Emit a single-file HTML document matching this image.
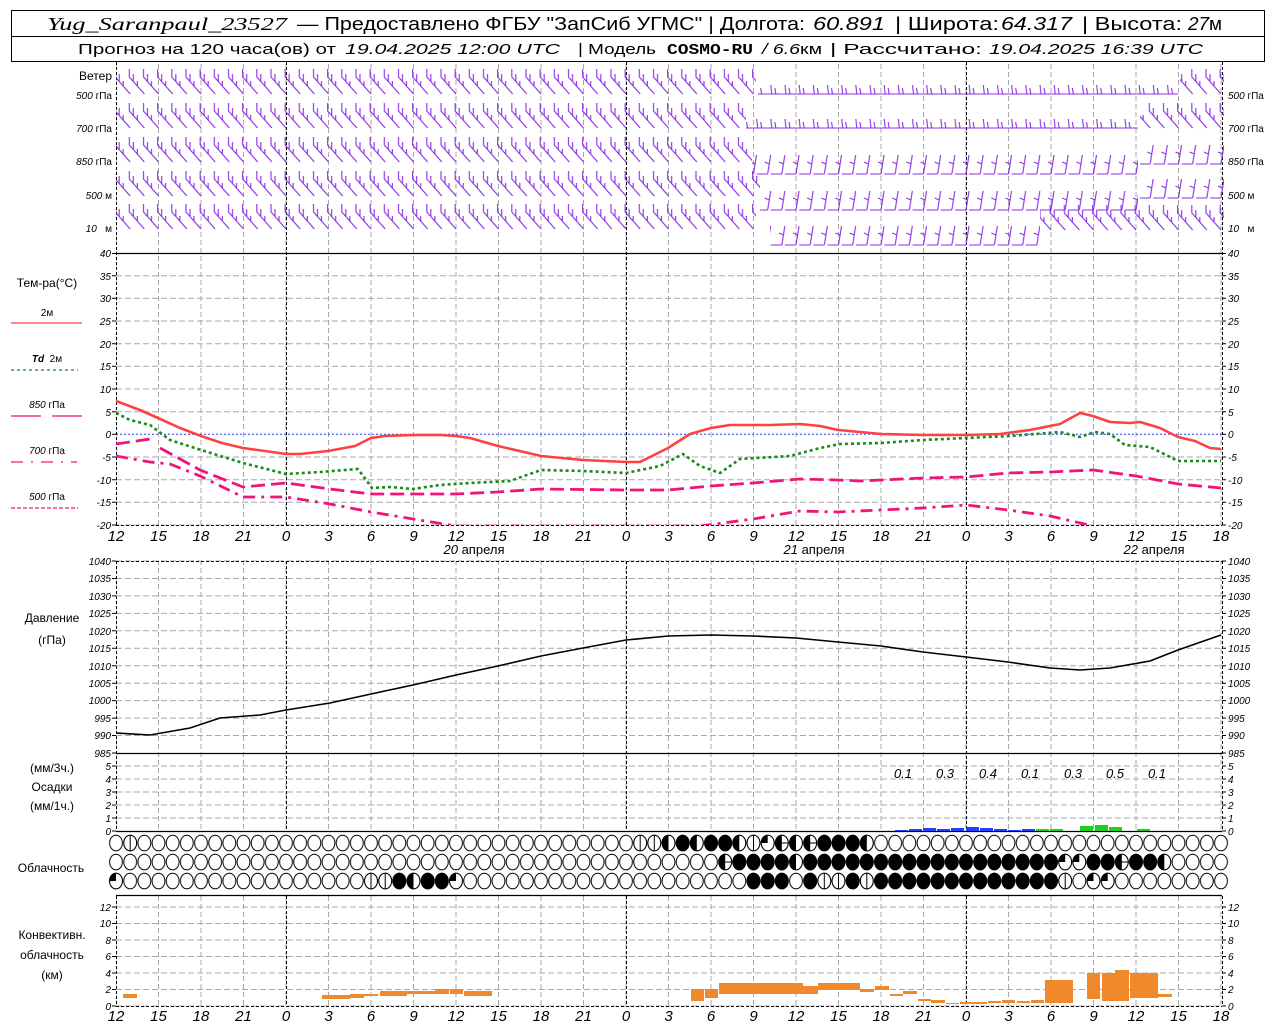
<!DOCTYPE html>
<html><head><meta charset="utf-8"><style>
html,body{margin:0;padding:0;background:#fff}
svg{display:block}
text{font-family:"Liberation Sans",sans-serif;fill:#000}
.it{font-style:italic}
.ax{font-size:10px;font-style:italic}
.lb{font-size:12px}
.hr{font-size:15px;font-style:italic;text-anchor:middle}
</style></head><body>
<svg width="1280" height="1024" viewBox="0 0 1280 1024" xmlns="http://www.w3.org/2000/svg">
<defs>
<pattern id="vg" patternUnits="userSpaceOnUse" x="115.5" y="0" width="42.5" height="8">
<line x1="0.5" y1="0" x2="0.5" y2="5" stroke="#a8a8a8" stroke-width="1"/></pattern>
<g id="bA" fill="none" stroke="#8b2ee6" stroke-width="1.1"><path d="M0,0 L-15,-17 L-15,-25 M-11,-12.5 L-11,-20 M-7,-8 L-7,-13"/></g>
<g id="bB" fill="none" stroke="#8b2ee6" stroke-width="1.1"><path d="M0,0 L3,-19 M0,0 L-11,0 M1.5,-10 L-3,-12"/></g>
<g id="bC" fill="none" stroke="#8b2ee6" stroke-width="1.1"><path d="M0,0 L-14,0 M-10,0 L-11,-9 M-6,0 L-7,-6"/></g>
<pattern id="pA" patternUnits="userSpaceOnUse" x="116" y="0" width="14.1667" height="40">
<use href="#bA" x="0" y="32"/><use href="#bA" x="14.1667" y="32"/><use href="#bA" x="28.333" y="32"/></pattern>
<pattern id="pB" patternUnits="userSpaceOnUse" x="116" y="0" width="14.1667" height="40">
<use href="#bB" x="0" y="32"/><use href="#bB" x="14.1667" y="32"/><use href="#bB" x="-14.1667" y="32"/></pattern>
<pattern id="pC" patternUnits="userSpaceOnUse" x="116" y="0" width="14.1667" height="40">
<use href="#bC" x="0" y="32"/><use href="#bC" x="14.1667" y="32"/></pattern>
<pattern id="ce" patternUnits="userSpaceOnUse" x="108.917" y="0" width="14.1667" height="20">
<ellipse cx="7.083" cy="10" rx="6.4" ry="7.8" fill="#fff" stroke="#000" stroke-width="1"/></pattern>
<g id="F"><ellipse cx="0" cy="0" rx="6.4" ry="7.8" fill="#000" stroke="#000"/></g>
<g id="V"><ellipse cx="0" cy="0" rx="6.4" ry="7.8" fill="#fff" stroke="#000"/><line x1="0" y1="-7.8" x2="0" y2="7.8" stroke="#000"/></g>
<g id="L"><ellipse cx="0" cy="0" rx="6.4" ry="7.8" fill="#fff" stroke="#000"/><path d="M0,-7.8 A6.4,7.8 0 0 0 0,7.8Z" fill="#000"/></g>
<g id="Q"><ellipse cx="0" cy="0" rx="6.4" ry="7.8" fill="#fff" stroke="#000"/><path d="M0,0 L0,-7.8 A6.4,7.8 0 0 0 -6.4,0Z" fill="#000"/></g>
<g id="P"><ellipse cx="0" cy="0" rx="6.4" ry="7.8" fill="#fff" stroke="#000"/><path d="M0,-7.8 A6.4,7.8 0 0 0 0,7.8Z" fill="#000"/><line x1="-6.4" y1="0" x2="6.4" y2="0" stroke="#000"/></g>
<clipPath id="ct"><rect x="116" y="253" width="1106" height="272"/></clipPath>
</defs>
<rect width="1280" height="1024" fill="#fff"/>

<!-- header -->
<rect x="11.5" y="10.5" width="1253" height="51" fill="none" stroke="#000"/>
<line x1="11" y1="36.5" x2="1265" y2="36.5" stroke="#000"/>
<g style="font-size:18px">
<text x="47" y="30" textLength="240" lengthAdjust="spacingAndGlyphs" class="it" style="font-family:'Liberation Serif',serif">Yug_Saranpaul_23527</text>
<text x="297" y="30" textLength="508" lengthAdjust="spacingAndGlyphs">— Предоставлено ФГБУ "ЗапСиб УГМС" | Долгота:</text>
<text x="813" y="30" textLength="72" lengthAdjust="spacingAndGlyphs" class="it">60.891</text>
<text x="895" y="30" textLength="104" lengthAdjust="spacingAndGlyphs">| Широта:</text>
<text x="1001" y="30" textLength="71" lengthAdjust="spacingAndGlyphs" class="it">64.317</text>
<text x="1082" y="30" textLength="100" lengthAdjust="spacingAndGlyphs">| Высота:</text>
<text x="1188" y="30" textLength="34" lengthAdjust="spacingAndGlyphs"><tspan class="it">27</tspan>м</text>
</g>
<g style="font-size:15px">
<text x="78" y="54" textLength="258" lengthAdjust="spacingAndGlyphs">Прогноз на 120 часа(ов) от</text>
<text x="345" y="54" textLength="215" lengthAdjust="spacingAndGlyphs" class="it">19.04.2025 12:00 UTC</text>
<text x="578" y="54" textLength="78" lengthAdjust="spacingAndGlyphs">| Модель</text>
<text x="667" y="54" textLength="86" lengthAdjust="spacingAndGlyphs" style="font-weight:bold;font-family:'Liberation Mono',monospace">COSMO-RU</text>
<text x="762" y="54" textLength="60" lengthAdjust="spacingAndGlyphs"><tspan class="it">/ 6.6</tspan>км</text>
<text x="830" y="54" textLength="152" lengthAdjust="spacingAndGlyphs">| Рассчитано:</text>
<text x="989" y="54" textLength="214" lengthAdjust="spacingAndGlyphs" class="it">19.04.2025 16:39 UTC</text>
</g>

<!-- vertical grids -->
<rect x="116" y="62" width="1107" height="191" fill="url(#vg)"/>
<rect x="116" y="253" width="1107" height="272" fill="url(#vg)"/>
<rect x="116" y="561" width="1107" height="192" fill="url(#vg)"/>
<rect x="116" y="753" width="1107" height="78" fill="url(#vg)"/>
<rect x="116" y="896" width="1107" height="110" fill="url(#vg)"/>

<!-- horizontal grids -->
<g stroke="#a8a8a8" stroke-dasharray="6,3" stroke-width="1">
<path d="M116,275.7H1222M116,298.3H1222M116,321H1222M116,343.7H1222M116,366.3H1222M116,389H1222M116,411.7H1222M116,457H1222M116,479.7H1222M116,502.3H1222M116,525H1222"/>
<path d="M116,561H1222M116,578.5H1222M116,595.9H1222M116,613.4H1222M116,630.8H1222M116,648.3H1222M116,665.7H1222M116,683.2H1222M116,700.6H1222M116,718.1H1222M116,735.5H1222"/>
<path d="M116,766H1222M116,779H1222M116,792H1222M116,805H1222M116,818H1222"/>
<path d="M116,907H1222M116,923.5H1222M116,940H1222M116,956.5H1222M116,973H1222M116,989.5H1222M116,1006H1222"/>
</g>
<line x1="116" y1="434.3" x2="1222" y2="434.3" stroke="#2040ff" stroke-dasharray="2,2" stroke-width="1"/>
<g stroke="#000" stroke-dasharray="3,2" stroke-width="1">
<path d="M286.5,62V525M626.5,62V525M966.5,62V525M286.5,561V831M626.5,561V831M966.5,561V831M286.5,896V1006M626.5,896V1006M966.5,896V1006"/>
<path d="M116.5,62V525M1222.5,62V525M116.5,561V831M1222.5,561V831M116.5,896V1006M1222.5,896V1006"/>
<path d="M116,525.5H1222M116,561.5H1222M116,1006.5H1222"/>
</g>
<g stroke="#000" stroke-width="1.3">
<path d="M116,253.5H1222M116,753.5H1222M116,831.5H1222M116,895.5H1222"/>
</g>
<g stroke="#000">
<path d="M112,275.7H116M112,298.3H116M112,321H116M112,343.7H116M112,366.3H116M112,389H116M112,411.7H116M112,434.3H116M112,457H116M112,479.7H116M112,502.3H116M112,525H116M112,253.5H116"/>
<path d="M1222,275.7H1226M1222,298.3H1226M1222,321H1226M1222,343.7H1226M1222,366.3H1226M1222,389H1226M1222,411.7H1226M1222,434.3H1226M1222,457H1226M1222,479.7H1226M1222,502.3H1226M1222,525H1226M1222,253.5H1226"/>
<path d="M112,561H116M112,578.5H116M112,595.9H116M112,613.4H116M112,630.8H116M112,648.3H116M112,665.7H116M112,683.2H116M112,700.6H116M112,718.1H116M112,735.5H116M112,753H116M112,766H116M112,779H116M112,792H116M112,805H116M112,818H116M112,831H116"/>
<path d="M1222,561H1226M1222,578.5H1226M1222,595.9H1226M1222,613.4H1226M1222,630.8H1226M1222,648.3H1226M1222,665.7H1226M1222,683.2H1226M1222,700.6H1226M1222,718.1H1226M1222,735.5H1226M1222,753H1226M1222,766H1226M1222,779H1226M1222,792H1226M1222,805H1226M1222,818H1226M1222,831H1226"/>
<path d="M112,907H116M112,923.5H116M112,940H116M112,956.5H116M112,973H116M112,989.5H116M112,1006H116M1222,907H1226M1222,923.5H1226M1222,940H1226M1222,956.5H1226M1222,973H1226M1222,989.5H1226M1222,1006H1226"/>
</g>

<!-- wind barbs -->
<g transform="translate(0,62)"><rect x="116" y="0" width="640" height="40" fill="url(#pA)"/><rect x="758" y="0" width="420" height="40" fill="url(#pC)"/><rect x="1180" y="0" width="44" height="40" fill="url(#pA)"/></g>
<g transform="translate(0,96)"><rect x="116" y="0" width="630" height="40" fill="url(#pA)"/><rect x="746" y="0" width="392" height="40" fill="url(#pC)"/><rect x="1140" y="0" width="84" height="40" fill="url(#pA)"/></g>
<g transform="translate(0,130)"><rect x="116" y="0" width="636" height="40" fill="url(#pA)"/></g>
<g transform="translate(0,142)"><rect x="752" y="0" width="386" height="40" fill="url(#pB)"/></g>
<g transform="translate(0,132)"><rect x="1140" y="0" width="84" height="40" fill="url(#pB)"/></g>
<g transform="translate(0,164)"><rect x="116" y="0" width="644" height="40" fill="url(#pA)"/></g>
<g transform="translate(0,178)"><rect x="760" y="0" width="378" height="40" fill="url(#pB)"/></g>
<g transform="translate(0,166)"><rect x="1140" y="0" width="84" height="40" fill="url(#pB)"/></g>
<g transform="translate(0,197)"><rect x="116" y="0" width="640" height="40" fill="url(#pA)"/></g>
<g transform="translate(0,213)"><rect x="770" y="0" width="270" height="40" fill="url(#pB)"/></g>
<g transform="translate(0,198)"><rect x="1040" y="0" width="184" height="40" fill="url(#pA)"/></g>

<!-- temperature curves -->
<g clip-path="url(#ct)" fill="none" stroke-linejoin="round">
<polyline stroke="#ff4040" stroke-width="2.6" points="116,401 140,410 158,418 180,428 201,436 222,443 243,448 265,451 286,454 300,454 328,451 355,446 371,438 385,436 413,435 440,435 456,436 470,438 498,446 541,456 583,460 626,462 640,462 668,448 690,434 711,428 730,425 770,425 800,424 820,426 838,430 860,432 881,434 923,435 966,435 1000,434 1030,430 1060,424 1080,413 1093,416 1110,422 1130,423 1140,422 1160,428 1178,437 1195,441 1210,448 1221,449"/>
<polyline stroke="#1a8a1a" stroke-width="2.6" stroke-dasharray="3,3" points="116,413 130,420 150,425 170,440 201,450 243,463 286,474 320,472 358,469 372,488 390,487 413,489 440,485 470,483 510,481 541,470 583,471 626,473 660,466 683,454 700,466 720,473 740,459 790,456 820,448 840,444 881,443 923,440 966,438 1010,436 1060,432 1080,437 1095,432 1110,434 1125,445 1150,447 1178,461 1221,461"/>
<path stroke="#f0147a" stroke-width="2.8" stroke-dasharray="14,6" d="M116,444 L150,439 M160,448 L200,470 L243,487 L286,483 L330,489 L371,494 L413,494 L456,494 L498,492 L541,489 L626,490 L668,490 L711,486 L753,483 L800,479 L838,480 L860,481 L881,480 L923,478 L966,477 L1008,473 L1050,472 L1093,470 L1136,476 L1178,484 L1221,488"/>
<polyline stroke="#f0147a" stroke-width="2.8" stroke-dasharray="12,6,3,6" points="116,456 150,462 170,464 200,476 243,497 286,497 330,504 371,512 413,519 456,526 700,526 753,519 800,511 838,512 881,510 923,508 966,505 1008,510 1050,516 1093,526"/>
</g>

<!-- pressure -->
<polyline fill="none" stroke="#000" stroke-width="1.6" points="116,733 150,735 190,728 220,718 260,715 286,710 330,703 371,694 413,685 456,675 498,666 541,656 583,648 626,640 668,636 711,635 753,636 796,638 838,642 881,646 923,652 966,657 1008,662 1050,668 1080,670 1110,668 1150,661 1178,650 1221,635"/>

<!-- precip -->
<g fill="#2040ff">
<rect x="895" y="830" width="13" height="1"/><rect x="909" y="829" width="13" height="2"/><rect x="923" y="828" width="13" height="3"/><rect x="937" y="829" width="13" height="2"/><rect x="951" y="828" width="13" height="3"/><rect x="966" y="827" width="13" height="4"/><rect x="980" y="828" width="13" height="3"/><rect x="994" y="829" width="13" height="2"/><rect x="1008" y="830" width="13" height="1"/><rect x="1022" y="829" width="13" height="2"/>
</g>
<g fill="#20d020">
<rect x="1036" y="829" width="13" height="2"/><rect x="1050" y="829" width="13" height="2"/><rect x="1080" y="826" width="13" height="5"/><rect x="1095" y="825" width="13" height="6"/><rect x="1109" y="827" width="13" height="4"/><rect x="1137" y="829" width="13" height="2"/>
</g>
<g style="font-size:13px;font-style:italic" text-anchor="middle">
<text x="903" y="778">0.1</text><text x="945" y="778">0.3</text><text x="988" y="778">0.4</text><text x="1030" y="778">0.1</text><text x="1073" y="778">0.3</text><text x="1115" y="778">0.5</text><text x="1157" y="778">0.1</text>
</g>

<!-- clouds -->
<g transform="translate(0,833)"><rect x="108.917" y="0" width="1119.2" height="20" fill="url(#ce)"/></g>
<g transform="translate(0,852)"><rect x="108.917" y="0" width="1119.2" height="20" fill="url(#ce)"/></g>
<g transform="translate(0,871)"><rect x="108.917" y="0" width="1119.2" height="20" fill="url(#ce)"/></g>
<g>
<use href="#V" x="130.2" y="843"/>
<use href="#V" x="640.2" y="843"/><use href="#V" x="654.3" y="843"/><use href="#L" x="668.5" y="843"/><use href="#F" x="682.7" y="843"/><use href="#L" x="696.8" y="843"/><use href="#F" x="711" y="843"/><use href="#F" x="725.2" y="843"/><use href="#L" x="739.3" y="843"/><use href="#V" x="753.5" y="843"/><use href="#Q" x="767.7" y="843"/><use href="#P" x="781.8" y="843"/><use href="#L" x="796" y="843"/><use href="#P" x="810.2" y="843"/><use href="#F" x="824.3" y="843"/><use href="#F" x="838.5" y="843"/><use href="#F" x="852.7" y="843"/><use href="#L" x="866.8" y="843"/>
<use href="#P" x="725.2" y="862"/><use href="#F" x="739.3" y="862"/><use href="#F" x="753.5" y="862"/><use href="#F" x="767.7" y="862"/><use href="#F" x="781.8" y="862"/><use href="#L" x="796" y="862"/><use href="#F" x="810.2" y="862"/><use href="#F" x="824.3" y="862"/><use href="#F" x="838.5" y="862"/><use href="#F" x="852.7" y="862"/><use href="#F" x="866.8" y="862"/><use href="#F" x="881" y="862"/><use href="#F" x="895.2" y="862"/><use href="#F" x="909.3" y="862"/><use href="#F" x="923.5" y="862"/><use href="#F" x="937.7" y="862"/><use href="#F" x="951.8" y="862"/><use href="#F" x="966" y="862"/><use href="#F" x="980.2" y="862"/><use href="#F" x="994.3" y="862"/><use href="#F" x="1008.5" y="862"/><use href="#F" x="1022.7" y="862"/><use href="#F" x="1036.8" y="862"/><use href="#F" x="1051" y="862"/><use href="#Q" x="1065.2" y="862"/><use href="#Q" x="1079.3" y="862"/><use href="#F" x="1093.5" y="862"/><use href="#F" x="1107.7" y="862"/><use href="#P" x="1121.8" y="862"/><use href="#F" x="1136" y="862"/><use href="#F" x="1150.2" y="862"/><use href="#L" x="1164.3" y="862"/>
<use href="#Q" x="116" y="881"/><use href="#V" x="371" y="881"/><use href="#V" x="385.2" y="881"/><use href="#F" x="399.3" y="881"/><use href="#L" x="413.5" y="881"/><use href="#F" x="427.7" y="881"/><use href="#F" x="441.8" y="881"/><use href="#Q" x="456" y="881"/>
<use href="#F" x="753.5" y="881"/><use href="#F" x="767.7" y="881"/><use href="#F" x="781.8" y="881"/><use href="#F" x="810.2" y="881"/><use href="#V" x="824.3" y="881"/><use href="#V" x="838.5" y="881"/><use href="#F" x="852.7" y="881"/><use href="#V" x="866.8" y="881"/><use href="#F" x="881" y="881"/><use href="#F" x="895.2" y="881"/><use href="#F" x="909.3" y="881"/><use href="#F" x="923.5" y="881"/><use href="#F" x="937.7" y="881"/><use href="#F" x="951.8" y="881"/><use href="#F" x="966" y="881"/><use href="#F" x="980.2" y="881"/><use href="#F" x="994.3" y="881"/><use href="#F" x="1008.5" y="881"/><use href="#F" x="1022.7" y="881"/><use href="#F" x="1036.8" y="881"/><use href="#F" x="1051" y="881"/><use href="#V" x="1065.2" y="881"/><use href="#Q" x="1093.5" y="881"/><use href="#Q" x="1107.7" y="881"/>
</g>

<!-- convective -->
<g fill="#f0882c">
<rect x="123" y="994" width="14" height="4"/>
<rect x="322" y="995" width="28" height="4"/><rect x="350" y="994" width="14" height="4"/><rect x="364" y="994" width="14" height="2"/><rect x="380" y="991" width="27" height="5"/><rect x="407" y="991" width="42" height="3"/><rect x="435" y="989" width="14" height="2"/><rect x="450" y="989" width="13" height="5"/><rect x="464" y="991" width="28" height="5"/>
<rect x="691" y="989" width="13" height="12"/><rect x="705" y="989" width="13" height="9"/><rect x="719" y="983" width="84" height="11"/><rect x="803" y="986" width="15" height="8"/><rect x="818" y="983" width="42" height="7"/><rect x="860" y="989" width="14" height="3"/><rect x="875" y="986" width="14" height="4"/><rect x="890" y="994" width="13" height="2"/><rect x="903" y="991" width="14" height="3"/><rect x="918" y="999" width="13" height="2"/><rect x="931" y="1000" width="14" height="3"/><rect x="946" y="1003" width="13" height="1"/><rect x="960" y="1002" width="27" height="2"/><rect x="988" y="1001" width="13" height="2"/><rect x="1002" y="1000" width="13" height="3"/><rect x="1017" y="1001" width="13" height="2"/><rect x="1031" y="1000" width="13" height="3"/><rect x="1045" y="980" width="28" height="23"/><rect x="1087" y="973" width="13" height="26"/><rect x="1102" y="973" width="13" height="28"/><rect x="1115" y="970" width="14" height="31"/><rect x="1130" y="973" width="28" height="25"/><rect x="1158" y="994" width="14" height="3"/>
</g>

<!-- left labels -->
<g class="lb" text-anchor="end">
<text x="112" y="80">Ветер</text>
</g>
<g style="font-size:10px" text-anchor="end">
<text x="112" y="99"><tspan class="it">500</tspan> гПа</text>
<text x="112" y="132"><tspan class="it">700</tspan> гПа</text>
<text x="112" y="165"><tspan class="it">850</tspan> гПа</text>
<text x="112" y="199"><tspan class="it">500</tspan> м</text>
<text x="112" y="232"><tspan class="it">10</tspan>&#160;&#160;&#160;м</text>
</g>
<g style="font-size:10px">
<text x="1228" y="99"><tspan class="it">500</tspan> гПа</text>
<text x="1228" y="132"><tspan class="it">700</tspan> гПа</text>
<text x="1228" y="165"><tspan class="it">850</tspan> гПа</text>
<text x="1228" y="199"><tspan class="it">500</tspan> м</text>
<text x="1228" y="232"><tspan class="it">10</tspan>&#160;&#160;&#160;м</text>
</g>
<g class="lb" text-anchor="middle">
<text x="47" y="287">Тем-ра(°С)</text>
<text x="47" y="316" style="font-size:10px">2м</text>
<text x="47" y="362" style="font-size:10px"><tspan class="it" style="font-weight:bold">Td</tspan>&#160;&#160;2м</text>
<text x="47" y="408" style="font-size:10px"><tspan class="it">850</tspan> гПа</text>
<text x="47" y="454" style="font-size:10px"><tspan class="it">700</tspan> гПа</text>
<text x="47" y="500" style="font-size:10px"><tspan class="it">500</tspan> гПа</text>
<text x="52" y="622">Давление</text>
<text x="52" y="644">(гПа)</text>
<text x="52" y="772">(мм/3ч.)</text>
<text x="52" y="791">Осадки</text>
<text x="52" y="810">(мм/1ч.)</text>
<text x="51" y="872">Облачность</text>
<text x="52" y="939">Конвективн.</text>
<text x="52" y="959">облачность</text>
<text x="52" y="979">(км)</text>
</g>
<g stroke-width="1.3" fill="none">
<line x1="11" y1="323" x2="82" y2="323" stroke="#ff4040"/>
<line x1="11" y1="370" x2="78" y2="370" stroke="#1a8a1a" stroke-dasharray="3,3"/>
<line x1="11" y1="416" x2="41" y2="416" stroke="#f0147a"/><line x1="52" y1="416" x2="82" y2="416" stroke="#f0147a"/>
<line x1="11" y1="462" x2="77" y2="462" stroke="#f0147a" stroke-dasharray="12,8,2,8"/>
<line x1="11" y1="508" x2="78" y2="508" stroke="#f0147a" stroke-dasharray="4,2"/>
</g>

<!-- axis numbers -->
<g class="ax" text-anchor="end">
<text x="111" y="257">40</text><text x="111" y="280">35</text><text x="111" y="302">30</text><text x="111" y="325">25</text><text x="111" y="348">20</text><text x="111" y="370">15</text><text x="111" y="393">10</text><text x="111" y="416">5</text><text x="111" y="438">0</text><text x="111" y="461">-5</text><text x="111" y="484">-10</text><text x="111" y="506">-15</text><text x="111" y="529">-20</text>
<text x="111" y="565">1040</text><text x="111" y="582">1035</text><text x="111" y="600">1030</text><text x="111" y="617">1025</text><text x="111" y="635">1020</text><text x="111" y="652">1015</text><text x="111" y="670">1010</text><text x="111" y="687">1005</text><text x="111" y="704">1000</text><text x="111" y="722">995</text><text x="111" y="739">990</text><text x="111" y="757">985</text>
<text x="111" y="770">5</text><text x="111" y="783">4</text><text x="111" y="796">3</text><text x="111" y="809">2</text><text x="111" y="822">1</text><text x="111" y="835">0</text>
<text x="111" y="911">12</text><text x="111" y="927">10</text><text x="111" y="944">8</text><text x="111" y="960">6</text><text x="111" y="977">4</text><text x="111" y="993">2</text><text x="111" y="1010">0</text>
</g>
<g class="ax">
<text x="1228" y="257">40</text><text x="1228" y="280">35</text><text x="1228" y="302">30</text><text x="1228" y="325">25</text><text x="1228" y="348">20</text><text x="1228" y="370">15</text><text x="1228" y="393">10</text><text x="1228" y="416">5</text><text x="1228" y="438">0</text><text x="1228" y="461">-5</text><text x="1228" y="484">-10</text><text x="1228" y="506">-15</text><text x="1228" y="529">-20</text>
<text x="1228" y="565">1040</text><text x="1228" y="582">1035</text><text x="1228" y="600">1030</text><text x="1228" y="617">1025</text><text x="1228" y="635">1020</text><text x="1228" y="652">1015</text><text x="1228" y="670">1010</text><text x="1228" y="687">1005</text><text x="1228" y="704">1000</text><text x="1228" y="722">995</text><text x="1228" y="739">990</text><text x="1228" y="757">985</text>
<text x="1228" y="770">5</text><text x="1228" y="783">4</text><text x="1228" y="796">3</text><text x="1228" y="809">2</text><text x="1228" y="822">1</text><text x="1228" y="835">0</text>
<text x="1228" y="911">12</text><text x="1228" y="927">10</text><text x="1228" y="944">8</text><text x="1228" y="960">6</text><text x="1228" y="977">4</text><text x="1228" y="993">2</text><text x="1228" y="1010">0</text>
</g>

<!-- hour labels -->
<g class="hr">
<text x="116" y="541">12</text><text x="158.5" y="541">15</text><text x="201" y="541">18</text><text x="243.5" y="541">21</text><text x="286" y="541">0</text><text x="328.5" y="541">3</text><text x="371" y="541">6</text><text x="413.5" y="541">9</text><text x="456" y="541">12</text><text x="498.5" y="541">15</text><text x="541" y="541">18</text><text x="583.5" y="541">21</text><text x="626" y="541">0</text><text x="668.5" y="541">3</text><text x="711" y="541">6</text><text x="753.5" y="541">9</text><text x="796" y="541">12</text><text x="838.5" y="541">15</text><text x="881" y="541">18</text><text x="923.5" y="541">21</text><text x="966" y="541">0</text><text x="1008.5" y="541">3</text><text x="1051" y="541">6</text><text x="1093.5" y="541">9</text><text x="1136" y="541">12</text><text x="1178.5" y="541">15</text><text x="1221" y="541">18</text>
</g>
<g class="hr">
<text x="116" y="1021">12</text><text x="158.5" y="1021">15</text><text x="201" y="1021">18</text><text x="243.5" y="1021">21</text><text x="286" y="1021">0</text><text x="328.5" y="1021">3</text><text x="371" y="1021">6</text><text x="413.5" y="1021">9</text><text x="456" y="1021">12</text><text x="498.5" y="1021">15</text><text x="541" y="1021">18</text><text x="583.5" y="1021">21</text><text x="626" y="1021">0</text><text x="668.5" y="1021">3</text><text x="711" y="1021">6</text><text x="753.5" y="1021">9</text><text x="796" y="1021">12</text><text x="838.5" y="1021">15</text><text x="881" y="1021">18</text><text x="923.5" y="1021">21</text><text x="966" y="1021">0</text><text x="1008.5" y="1021">3</text><text x="1051" y="1021">6</text><text x="1093.5" y="1021">9</text><text x="1136" y="1021">12</text><text x="1178.5" y="1021">15</text><text x="1221" y="1021">18</text>
</g>
<g style="font-size:13px" text-anchor="middle">
<text x="474" y="554"><tspan class="it">20</tspan> апреля</text>
<text x="814" y="554"><tspan class="it">21</tspan> апреля</text>
<text x="1154" y="554"><tspan class="it">22</tspan> апреля</text>
</g>
</svg>
</body></html>
